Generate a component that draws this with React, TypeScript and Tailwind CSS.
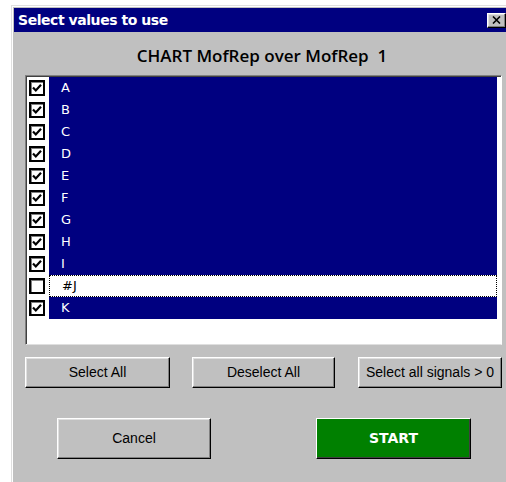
import React, { useState } from "react";

type Item = { label: string; checked: boolean };

const initialItems: Item[] = [
  { label: "A", checked: true },
  { label: "B", checked: true },
  { label: "C", checked: true },
  { label: "D", checked: true },
  { label: "E", checked: true },
  { label: "F", checked: true },
  { label: "G", checked: true },
  { label: "H", checked: true },
  { label: "I", checked: true },
  { label: "#J", checked: false },
  { label: "K", checked: true },
];

const raised =
  "border border-t-white border-l-white border-r-black border-b-black shadow-[inset_-1px_-1px_#808080,inset_1px_1px_#dfdfdf]";

const CheckBox = ({ checked }: { checked: boolean }) => (
  <div className="w-[16px] h-[16px] border-2 border-black bg-white shadow-[inset_1px_1px_#808080] flex items-center justify-center">
    {checked && (
      <svg width="10" height="10" viewBox="0 0 10 10">
        <polyline points="1,4.5 3.8,7.5 9,1.8" fill="none" stroke="black" strokeWidth="2.2" />
      </svg>
    )}
  </div>
);

const App = () => {
  const [items, setItems] = useState(initialItems);
  const focused = 9;

  const toggle = (i: number) =>
    setItems(items.map((it, n) => (n === i ? { ...it, checked: !it.checked } : it)));

  return (
    <div className="w-[506px] h-[482px] bg-white pl-[11px] pt-[5px] overflow-hidden font-['DejaVu_Sans',sans-serif]">
      <div className="h-full bg-[#c0c0c0] border-l border-t border-[#dfdfdf] shadow-[inset_1px_1px_#ffffff] pl-[2px] pt-[2px]">
        {/* title bar */}
        <div className="h-[24px] bg-[#000080] flex items-center justify-between pl-[4px]">
          <span className="text-white font-bold text-[14px] tracking-[-0.45px]">Select values to use</span>
          <button className={`w-[19px] h-[15px] bg-[#c0c0c0] ${raised} flex items-center justify-center`}>
            <svg width="9" height="8" viewBox="0 0 9 8">
              <path d="M1 0.5 L8 7.5 M8 0.5 L1 7.5" stroke="black" strokeWidth="1.6" />
            </svg>
          </button>
        </div>

        <div className="h-[43px] flex items-center justify-center pt-[5px] pl-[4px]">
          <span className="text-[17px] text-black font-['Open_Sans',sans-serif] font-semibold">
            CHART MofRep over MofRep&nbsp;&nbsp;1
          </span>
        </div>

        {/* value list */}
        <div className="ml-[11px] w-[477px] h-[270px] bg-white border border-t-[#808080] border-l-[#808080] border-r-white border-b-[#dfdfdf] shadow-[inset_1px_1px_#404040]">
          <div className="pt-[1px] pl-[3px]">
            {items.map((it, i) => (
              <div key={it.label} className="h-[22px] flex items-center" onClick={() => toggle(i)}>
                <CheckBox checked={it.checked} />
                <div
                  className={`ml-[4px] w-[448px] h-full flex items-center pl-[12px] text-[13px] ${
                    i === focused
                      ? "bg-white text-black border border-dotted border-black"
                      : "bg-[#000080] text-white"
                  }`}
                >
                  {it.label}
                </div>
              </div>
            ))}
          </div>
        </div>

        {/* selection buttons */}
        <div className="mt-[12px] ml-[11px] flex text-[14px] text-black font-['Liberation_Sans',sans-serif]">
          <button className={`w-[145px] h-[31px] bg-[#c0c0c0] ${raised}`}>Select All</button>
          <button className={`ml-[22px] w-[143px] h-[31px] bg-[#c0c0c0] ${raised}`}>Deselect All</button>
          <button className={`ml-[23px] w-[144px] h-[31px] bg-[#c0c0c0] ${raised}`}>Select all signals &gt; 0</button>
        </div>

        <div className="mt-[30px] ml-[43px] flex text-[14px] font-['Liberation_Sans',sans-serif]">
          <button className={`w-[154px] h-[41px] bg-[#c0c0c0] text-black ${raised}`}>Cancel</button>
          <button className="ml-[105px] w-[155px] h-[41px] bg-[#008000] text-white font-bold font-['DejaVu_Sans',sans-serif] border border-t-white border-l-white border-r-black border-b-black shadow-[inset_-1px_-1px_#404040]">
            START
          </button>
        </div>
      </div>
    </div>
  );
};

export default App;
